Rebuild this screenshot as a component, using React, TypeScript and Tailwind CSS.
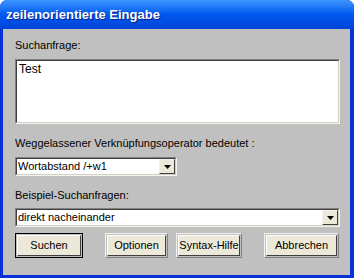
import React from 'react';

const font = { fontFamily: '"Liberation Sans", Arial, sans-serif' };

function Sunken({ className = '', children }: { className?: string; children?: React.ReactNode }) {
  return (
    <div className={`border-t-[#808080] border-l-[#808080] border-b-[#f4f3ee] border-r-[#f4f3ee] border bg-white ${className}`}>
      <div className="h-full w-full border border-t-[#404040] border-l-[#404040] border-b-[#d4d0c8] border-r-[#d4d0c8]">
        {children}
      </div>
    </div>
  );
}

function Arrow() {
  return (
    <div className="h-full w-[16px] bg-[#ece9d8] border border-t-[#f4f3ee] border-l-[#f4f3ee] border-b-[#404040] border-r-[#404040] flex items-center justify-center">
      <svg width="7" height="4" viewBox="0 0 7 4">
        <path d="M0 0h7L3.5 4z" fill="#000" />
      </svg>
    </div>
  );
}

function Select({ value, className }: { value: string; className: string }) {
  return (
    <Sunken className={className}>
      <div className="flex h-full">
        <div className="flex-1 pl-[1px] text-[11px] leading-[15px] text-black whitespace-nowrap">{value}</div>
        <Arrow />
      </div>
    </Sunken>
  );
}

function Button({ label, w, main }: { label: string; w: string; main?: boolean }) {
  return (
    <div className={`${w} h-[25px] p-[1px] border ${main ? 'border-black' : 'border-t-[#f4f3ee] border-l-[#f4f3ee] border-b-[#808080] border-r-[#808080]'}`}>
      <div className="h-full w-full bg-[#ece9d8] border border-t-white border-l-white border-b-[#404040] border-r-[#404040] flex items-center justify-center text-[11px] text-black whitespace-nowrap">
        {label}
      </div>
    </div>
  );
}

export default function App() {
  return (
    <div className="w-[354px] h-[280px] bg-white" style={font}>
      <div className="w-[354px] h-[278px] flex flex-col rounded-t-[7px] overflow-hidden bg-[#0831d9]">
        <div className="h-[29px] shrink-0 bg-gradient-to-b from-[#3d95ff] via-[#0058ee] to-[#0044d8] flex items-center pl-[6px] text-white font-bold text-[13px]"
          style={{ textShadow: '1px 1px #0a1e8c' }}>
          zeilenorientierte Eingabe
        </div>
        <div className="flex-1 ml-[3px] mr-[4px] mb-[3px] bg-[#c0c0c0] pl-[12px] pr-[10px] pt-[10px] text-[11px] text-black">
          <div className="leading-[13px]">Suchanfrage:</div>
          <Sunken className="mt-[7px] h-[65px] w-[325px]">
            <div className="pl-[2px] pt-[1px] leading-[15px] text-[12px]">Test</div>
          </Sunken>
          <div className="leading-[13px] mt-[13px]">Weggelassener Verknüpfungsoperator bedeutet :</div>
          <Select value="Wortabstand /+w1" className="mt-[7px] h-[19px] w-[162px]" />
          <div className="leading-[13px] mt-[13px]">Beispiel-Suchanfragen:</div>
          <Select value="direkt nacheinander" className="mt-[6px] h-[19px] w-[325px]" />
          <div className="flex mt-[6px]">
            <Button label="Suchen" w="w-[68px]" main />
            <div className="ml-[22px]"><Button label="Optionen" w="w-[63px]" /></div>
            <div className="ml-[8px]"><Button label="Syntax-Hilfe" w="w-[66px]" /></div>
            <div className="ml-[22px]"><Button label="Abbrechen" w="w-[75px]" /></div>
          </div>
        </div>
      </div>
    </div>
  );
}
